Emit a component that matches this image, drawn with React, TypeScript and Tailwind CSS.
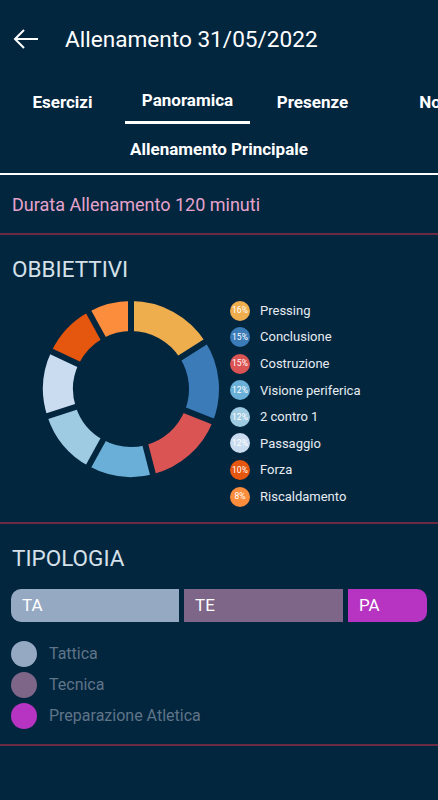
import React from 'react';

const goals = [
  { label: 'Pressing', pct: 16, color: '#efae4e' },
  { label: 'Conclusione', pct: 15, color: '#3a7bb8' },
  { label: 'Costruzione', pct: 15, color: '#db5454' },
  { label: 'Visione periferica', pct: 12, color: '#6aafd8' },
  { label: '2 contro 1', pct: 12, color: '#9fcbe2' },
  { label: 'Passaggio', pct: 12, color: '#c9dcf0' },
  { label: 'Forza', pct: 10, color: '#e5560e' },
  { label: 'Riscaldamento', pct: 8, color: '#fc8d3c' },
];

const types = [
  { code: 'TA', label: 'Tattica', color: '#95a9c3', w: 'w-[168px]' },
  { code: 'TE', label: 'Tecnica', color: '#7e6688', w: 'w-[159px]' },
  { code: 'PA', label: 'Preparazione Atletica', color: '#b634c1', w: 'flex-1' },
];

const BG = '#03263f';

const Donut = () => {
  const cx = 90;
  const cy = 90;
  const rOut = 88;
  const rIn = 58;
  const pt = (r: number, a: number) => {
    const rad = ((a - 90) * Math.PI) / 180;
    return [cx + r * Math.cos(rad), cy + r * Math.sin(rad)];
  };
  let start = 0;
  const segs = goals.map((g) => {
    const a0 = start;
    const a1 = start + (g.pct / 100) * 360;
    start = a1;
    const large = a1 - a0 > 180 ? 1 : 0;
    const [x0, y0] = pt(rOut, a0);
    const [x1, y1] = pt(rOut, a1);
    const [x2, y2] = pt(rIn, a1);
    const [x3, y3] = pt(rIn, a0);
    const d = `M${x0} ${y0} A${rOut} ${rOut} 0 ${large} 1 ${x1} ${y1} L${x2} ${y2} A${rIn} ${rIn} 0 ${large} 0 ${x3} ${y3} Z`;
    return { d, color: g.color, a0 };
  });
  return (
    <svg width="180" height="180" viewBox="0 0 180 180">
      {segs.map((s, i) => (
        <path key={i} d={s.d} fill={s.color} />
      ))}
      {segs.map((s, i) => {
        const [x, y] = pt(rOut + 4, s.a0);
        return <line key={'l' + i} x1={cx} y1={cy} x2={x} y2={y} stroke={BG} strokeWidth="6" />;
      })}
    </svg>
  );
};

export default function App() {
  return (
    <div className="w-[438px] h-[800px] bg-[#03263f] text-white overflow-hidden" style={{ fontFamily: 'Roboto, "Liberation Sans", sans-serif' }}>
      {/* Top bar */}
      <div className="h-[78px] flex items-center pl-[13px]">
        <svg width="26" height="22" viewBox="0 0 26 22" fill="none" stroke="white" strokeWidth="2">
          <path d="M25 11H2M11 2L2 11L11 20" />
        </svg>
        <span className="ml-[26px] text-[22.6px] leading-none mt-[2px]">Allenamento 31/05/2022</span>
      </div>

      {/* Tabs */}
      <div className="flex h-[48px] overflow-hidden">
        {['Esercizi', 'Panoramica', 'Presenze', 'Note'].map((t, i) => (
          <div key={t} className="w-[125px] shrink-0 flex flex-col items-center">
            <div className={`text-[17px] font-bold leading-none whitespace-nowrap ${i === 1 ? 'mt-[14px]' : 'mt-[16px]'}`}>{t}</div>
            {i === 1 && <div className="mt-[12px] h-[3px] w-[125px] bg-white" />}
          </div>
        ))}
      </div>
      <div className="text-center text-[17px] font-bold h-[47px] pt-[15px] leading-none">Allenamento Principale</div>
      <div className="h-[2px] bg-white" />

      {/* Durata */}
      <div className="h-[58px] flex items-center px-[12px] text-[18px] text-[#e6a3cc]">Durata Allenamento 120 minuti</div>
      <div className="h-[2px] bg-[#6b2a43]" />

      {/* Obbiettivi */}
      <div className="px-[12px] pt-[23px] text-[22.5px] leading-none text-[#d5e0e9]">OBBIETTIVI</div>
      <div className="flex mt-[18px] h-[223px]">
        <div className="ml-[41px]">
          <Donut />
        </div>
        <div className="ml-[9px] mt-[2px] flex flex-col gap-[6.6px]">
          {goals.map((g) => (
            <div key={g.label} className="flex items-center h-[20px]">
              <div className="w-[20px] h-[20px] rounded-full flex items-center justify-center text-[8.5px] text-white" style={{ background: g.color }}>
                {g.pct}%
              </div>
              <span className="ml-[10px] text-[13px] text-[#e6ecf1]">{g.label}</span>
            </div>
          ))}
        </div>
      </div>
      <div className="h-[2px] bg-[#6b2a43]" />

      {/* Tipologia */}
      <div className="px-[12px] pt-[23px] text-[22.5px] leading-none text-[#d5e0e9]">TIPOLOGIA</div>
      <div className="mx-[11px] mt-[20px] flex gap-[5px] h-[33px] rounded-[10px] overflow-hidden">
        {types.map((t) => (
          <div key={t.code} className={`${t.w} shrink-0 flex items-center pl-[11px] text-[17px] text-white`} style={{ background: t.color }}>
            {t.code}
          </div>
        ))}
      </div>
      <div className="mt-[19px] px-[11px] flex flex-col gap-[5px]">
        {types.map((t) => (
          <div key={t.label} className="flex items-center h-[26px]">
            <div className="w-[26px] h-[26px] rounded-full" style={{ background: t.color }} />
            <span className="ml-[12px] text-[16px] text-[#5f7487]">{t.label}</span>
          </div>
        ))}
      </div>
      <div className="mt-[15px] h-[2px] bg-[#6b2a43]" />
    </div>
  );
}
